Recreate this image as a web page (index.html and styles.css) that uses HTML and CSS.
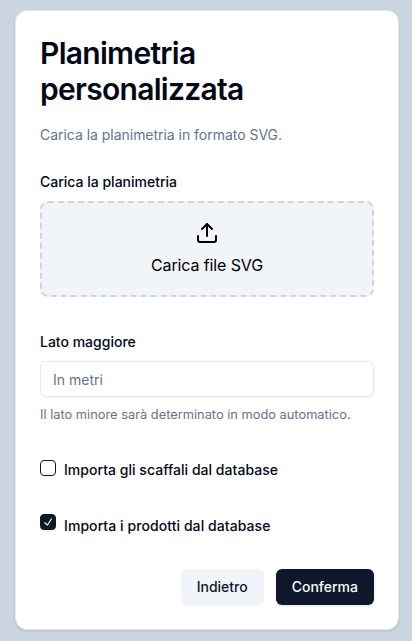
FILE: index.html
```html
<!DOCTYPE html>
<html lang="it">
<head>
<meta charset="utf-8">
<title>Planimetria personalizzata</title>
<link rel="stylesheet" href="styles.css">
</head>
<body>
<main class="card">
  <header class="card-header">
    <h1>Planimetria personalizzata</h1>
    <p class="subtitle">Carica la planimetria in formato SVG.</p>
  </header>
  <form class="form">
    <div class="field">
      <span class="label">Carica la planimetria</span>
      <div class="dropzone">
        <svg class="upload" viewBox="0 0 24 24"><path d="M21 15v4a2 2 0 0 1-2 2H5a2 2 0 0 1-2-2v-4"/><path d="M17 8l-5-5-5 5"/><path d="M12 3v12"/></svg>
        <span>Carica file SVG</span>
      </div>
    </div>
    <div class="field size-field">
      <label class="label" for="side">Lato maggiore</label>
      <input class="input" id="side" placeholder="In metri">
      <p class="hint">Il lato minore sarà determinato in modo automatico.</p>
    </div>
    <div class="check-row shelves">
      <span class="checkbox"></span>
      <span class="label">Importa gli scaffali dal database</span>
    </div>
    <div class="check-row products">
      <span class="checkbox checked"><svg viewBox="0 0 15 15"><path d="M11.467 3.727c.289.189.37.576.181.865l-4.25 6.5a.625.625 0 0 1-.944.12l-2.75-2.5a.625.625 0 0 1 .841-.925l2.208 2.007 3.849-5.886a.625.625 0 0 1 .865-.181z"/></svg></span>
      <span class="label">Importa i prodotti dal database</span>
    </div>
    <div class="actions">
      <button type="button" class="button secondary">Indietro</button>
      <button type="button" class="button primary">Conferma</button>
    </div>
  </form>
</main>
</body>
</html>
```
FILE: styles.css
```css
* { box-sizing: border-box; margin: 0; }

body {
  height: 641px;
  padding: 10px 13px 11px 15px;
  background: #cbd5e1;
  color: #020817;
  font: 16px/24px Inter, "Liberation Sans", sans-serif;
  overflow: hidden;
}

.card {
  height: 620px;
  padding: 24px;
  border: 1px solid #e2e8f0;
  border-radius: 12px;
  background: #fff;
  box-shadow: 0 1px 3px rgb(0 0 0 / 10%), 0 1px 2px -1px rgb(0 0 0 / 10%);
}

h1 {
  font-size: 30px;
  font-weight: 600;
  line-height: 36px;
  letter-spacing: -0.71px;
}

.subtitle {
  margin-top: 18px;
  font-size: 14px;
  line-height: 20px;
  letter-spacing: -0.03px;
  color: #64748b;
}

.form { margin-top: 30px; }

.field { display: flex; flex-direction: column; }

.label { font-size: 14px; font-weight: 500; line-height: 14px; }

.dropzone {
  display: flex;
  flex-direction: column;
  align-items: center;
  gap: 8px;
  height: 96px;
  margin-top: 12px;
  padding-top: 18px;
  border: 2px dashed #d1d5db;
  border-radius: 8px;
  background: #f1f5f9;
  color: #000;
  letter-spacing: -0.12px;
}

.upload {
  width: 24px;
  height: 24px;
  fill: none;
  stroke: currentColor;
  stroke-width: 2;
  stroke-linecap: round;
  stroke-linejoin: round;
}

.size-field { margin-top: 38px; }

.input {
  height: 36px;
  margin-top: 12px;
  padding: 4px 12px;
  border: 1px solid #e2e8f0;
  border-radius: 6px;
  background: transparent;
  box-shadow: 0 1px 2px rgb(0 0 0 / 5%);
  font: 14px/20px Inter, sans-serif;
}

.input::placeholder { color: #64748b; }

.hint {
  margin-top: 8px;
  font-size: 12.8px;
  line-height: 19.2px;
  letter-spacing: 0.015px;
  color: #64748b;
}

.check-row { display: flex; gap: 8px; height: 22px; }
.shelves { margin-top: 36px; }
.shelves .label { margin-top: 3px; letter-spacing: 0.03px; }
.products { margin-top: 32px; }
.products .label { margin-top: 5px; letter-spacing: 0.07px; }

.checkbox {
  width: 16px;
  height: 16px;
  border: 1px solid #0f172a;
  border-radius: 4px;
  box-shadow: 0 1px 2px rgb(0 0 0 / 5%);
}

.checked { display: grid; place-items: center; background: #0f172a; color: #f8fafc; }
.checked svg { width: 14px; height: 14px; fill: currentColor; }

.actions { display: flex; justify-content: flex-end; gap: 12px; margin-top: 33px; }

.button {
  height: 36px;
  padding: 8px 16px;
  border: 0;
  border-radius: 6px;
  font: 500 14px/20px Inter, sans-serif;
}

.secondary { background: #f1f5f9; color: #0f172a; box-shadow: 0 1px 2px rgb(0 0 0 / 5%); }
.primary { background: #0f172a; color: #f8fafc; box-shadow: 0 1px 3px rgb(0 0 0 / 10%), 0 1px 2px -1px rgb(0 0 0 / 10%); }
```
